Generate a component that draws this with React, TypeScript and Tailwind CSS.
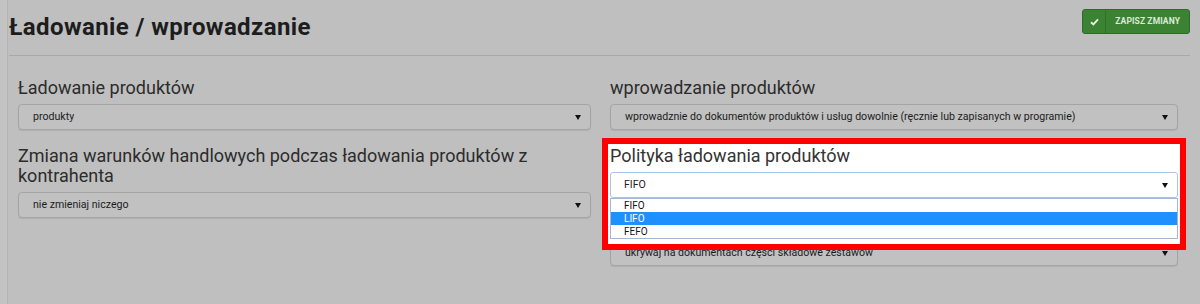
const font = { fontFamily: "Roboto, 'Liberation Sans', sans-serif" };

function Arrow() {
  return (
    <svg width="6" height="5" viewBox="0 0 6 5" className="shrink-0">
      <polygon points="0,0 6,0 3,5" fill="#111" />
    </svg>
  );
}

interface SelectBoxProps {
  value: string;
  active?: boolean;
}

function SelectBox({ value, active }: SelectBoxProps) {
  return (
    <div
      className={
        active
          ? "relative flex h-[26px] items-center justify-between rounded-[3px] border border-[#a9c3eb] bg-white pl-[13px] pr-[9px] text-[10.6px] text-[#222]"
          : "flex h-[26px] items-center justify-between rounded-[4px] border border-[#a4a4a4] bg-[#c1c1c1] pl-[14px] pr-[9px] text-[10.6px] text-[#1c1c1c] shadow-[0_1px_1px_rgba(0,0,0,0.08)]"
      }
    >
      <span className="truncate">{value}</span>
      <Arrow />
    </div>
  );
}

function Label({ children, light }: { children: React.ReactNode; light?: boolean }) {
  return (
    <div className={light ? "relative mb-[6px] text-[18px] leading-[20px] text-[#333]" : "mb-[6px] text-[18px] leading-[20px] text-[#2c2c2c]"}>
      {children}
    </div>
  );
}

export default function App() {
  const options = ["FIFO", "LIFO", "FEFO"];

  return (
    <div className="h-[304px] w-full overflow-hidden bg-[#c3c3c3]" style={font}>
      <div className="ml-[7px] h-full border-l border-[#b4b4b4] bg-[#bfbfbf] pl-[1px] pr-[10px]">
        {/* nagłówek */}
        <div className="flex items-start justify-between pt-[9px]">
          <h1 className="mt-[4px] text-[24px] font-bold leading-[28px] tracking-[0.4px] text-[#1d1d1d]">
            Ładowanie / wprowadzanie
          </h1>
          <button className="flex h-[25px] items-stretch overflow-hidden rounded-[3px] border border-[#2f6a29] bg-[#3b8233] text-[#dcebd9]">
            <span className="flex w-[23px] items-center justify-center border-r border-[#336f2c]">
              <svg width="9" height="8" viewBox="0 0 9 8">
                <path d="M1 4.2 L3.4 6.5 L8 1.3" stroke="#e4f0e2" strokeWidth="1.9" fill="none" />
              </svg>
            </span>
            <span className="flex items-center px-[9px] text-[8.5px] font-bold uppercase tracking-[0.1px]">Zapisz zmiany</span>
          </button>
        </div>
        <div className="mt-[14px] h-px bg-[#a9a9a9]" />

        <div className="mt-[22px] grid grid-cols-[573px_568px] gap-x-[19px] pl-[9px]">
          {/* lewa kolumna */}
          <div>
            <Label>Ładowanie produktów</Label>
            <SelectBox value="produkty" />
            <div className="mt-[16px]">
              <Label>Zmiana warunków handlowych podczas ładowania produktów z kontrahenta</Label>
              <SelectBox value="nie zmieniaj niczego" />
            </div>
          </div>

          {/* prawa kolumna */}
          <div>
            <Label>wprowadzanie produktów</Label>
            <SelectBox value="wprowadznie do dokumentów produktów i usług dowolnie (ręcznie lub zapisanych w programie)" />

            <div className="relative z-10 mt-[16px]">
              <div className="absolute -left-[8px] -right-[8px] -top-[8px] -bottom-[52px] border-[6px] border-[#ff0000] bg-white" />
              <Label light>Polityka ładowania produktów</Label>
              <div className="relative">
                <SelectBox value="FIFO" active />
                <div className="absolute left-0 right-0 top-full z-10 border border-[#a3b7d4] bg-white">
                  {options.map((o) => (
                    <div
                      key={o}
                      className={
                        o === "LIFO"
                          ? "flex h-[13px] items-center bg-[#1e90ff] pl-[13px] text-[10px] text-white"
                          : "flex h-[13px] items-center pl-[13px] text-[10px] text-[#111]"
                      }
                    >
                      {o}
                    </div>
                  ))}
                </div>
              </div>
            </div>

            <div className="mt-[16px]">
              <div className="mb-[6px] h-[20px]" aria-hidden="true" />
              <SelectBox value="ukrywaj na dokumentach części składowe zestawów" />
            </div>
          </div>
        </div>
      </div>
    </div>
  );
}
